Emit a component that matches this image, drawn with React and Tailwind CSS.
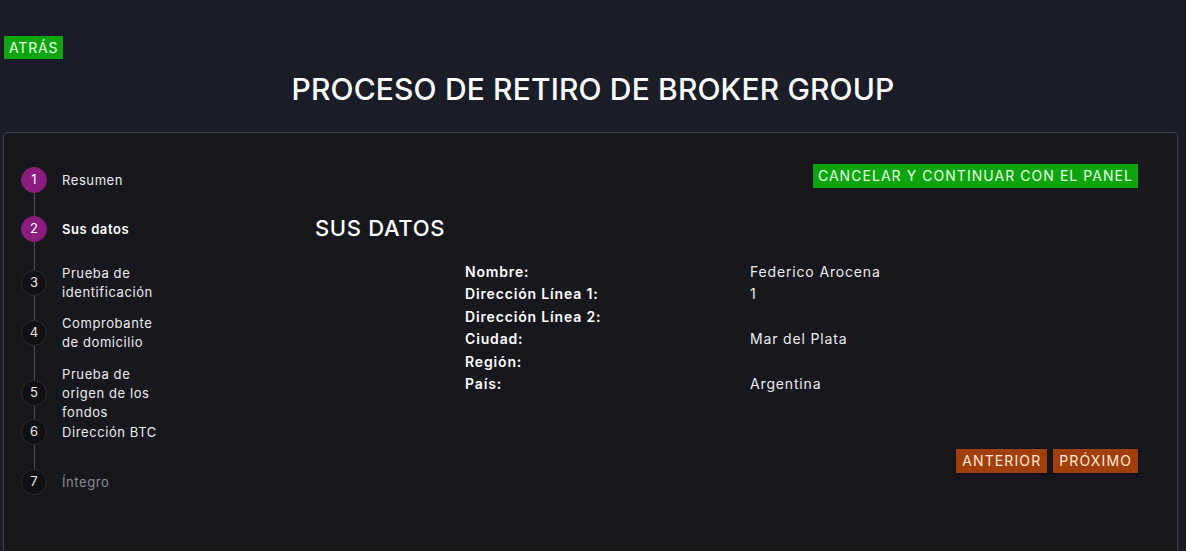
const steps = [
  { n: 1, label: ["Resumen"], state: "done", gap: 0 },
  { n: 2, label: ["Sus datos"], state: "current", gap: 23 },
  { n: 3, label: ["Prueba de", "identificación"], state: "todo", gap: 28 },
  { n: 4, label: ["Comprobante", "de domicilio"], state: "todo", gap: 24 },
  { n: 5, label: ["Prueba de", "origen de los", "fondos"], state: "todo", gap: 34 },
  { n: 6, label: ["Dirección BTC"], state: "todo", gap: 13 },
  { n: 7, label: ["Íntegro"], state: "muted", gap: 24 },
];

const datos = [
  ["Nombre:", "Federico Arocena"],
  ["Dirección Línea 1:", "1"],
  ["Dirección Línea 2:", ""],
  ["Ciudad:", "Mar del Plata"],
  ["Región:", ""],
  ["País:", "Argentina"],
];

function Step({ step }) {
  const circle =
    step.state === "done" || step.state === "current"
      ? "bg-[#8c1c7e] text-white border-[#8c1c7e]"
      : "bg-[#111114] text-[#e6e6e6] border-[#2c2c30]";
  const text =
    step.state === "current"
      ? "text-white font-semibold"
      : step.state === "muted"
      ? "text-[#8a8a8e]"
      : "text-[#ececec]";
  return (
    <>
      {step.gap > 0 && (
        <div className="ml-[13px] w-px bg-[#4a4b52]" style={{ height: step.gap }} />
      )}
      <div className="flex h-[26px] items-center">
        <div
          className={`flex h-[26px] w-[26px] shrink-0 items-center justify-center rounded-full border text-[13px] ${circle}`}
        >
          {step.n}
        </div>
        <div className={`ml-[15px] text-[13px] leading-[19px] tracking-[0.045em] ${text}`}>
          {step.label.map((l) => (
            <div key={l} className="whitespace-nowrap">{l}</div>
          ))}
        </div>
      </div>
    </>
  );
}

export default function App() {
  return (
    <div
      className="h-[551px] overflow-hidden bg-[#1a1c28] text-white"
      style={{ fontFamily: "Inter, 'Open Sans', sans-serif" }}
    >
      <div className="pl-[4px] pt-[35px]">
        <button className="h-[23px] bg-[#0ba50b] px-[5px] text-[14px] leading-[23px] tracking-[0.06em] text-[#e4ffe4]">
          ATRÁS
        </button>
      </div>
      <h1 className="mt-[12px] text-center text-[30px] font-medium leading-[36px] tracking-[0.005em] text-white">
        PROCESO DE RETIRO DE BROKER GROUP
      </h1>
      <div className="ml-[3px] mr-[8px] mt-[25px] flex h-[440px] rounded-[4px] border border-[#3c3f4e] bg-[#17181e]">
        <div className="w-[311px] shrink-0 pl-[17px] pt-[34px]">
          {steps.map((s) => (
            <Step key={s.n} step={s} />
          ))}
        </div>
        <div className="flex-1 pr-[39px] pt-[31px]">
          <div className="flex justify-end">
            <button className="h-[24px] bg-[#0ba50b] px-[5px] text-[14px] leading-[24px] tracking-[0.075em] text-[#e4ffe4]">
              CANCELAR Y CONTINUAR CON EL PANEL
            </button>
          </div>
          <h2 className="mt-[26px] text-[22px] font-medium leading-[28px] tracking-[0.03em] text-white">SUS DATOS</h2>
          <div className="mt-[19px] grid grid-cols-[285px_1fr] pl-[150px] text-[14px] leading-[22.4px] tracking-[0.06em]">
            {datos.map(([k, v]) => (
              <div key={k} className="contents">
                <div className="font-semibold text-white">{k}</div>
                <div className="text-[#ececec]">{v}</div>
              </div>
            ))}
          </div>
          <div className="mt-[54px] flex justify-end gap-[6px]">
            <button className="h-[24px] bg-[#a13f08] px-[6px] text-[14px] leading-[24px] tracking-[0.08em] text-[#ffe8d6] shadow-[0_2px_3px_rgba(0,0,0,0.5)]">
              ANTERIOR
            </button>
            <button className="h-[24px] bg-[#a13f08] px-[6px] text-[14px] leading-[24px] tracking-[0.08em] text-[#ffe8d6] shadow-[0_2px_3px_rgba(0,0,0,0.5)]">
              PRÓXIMO
            </button>
          </div>
        </div>
      </div>
    </div>
  );
}
